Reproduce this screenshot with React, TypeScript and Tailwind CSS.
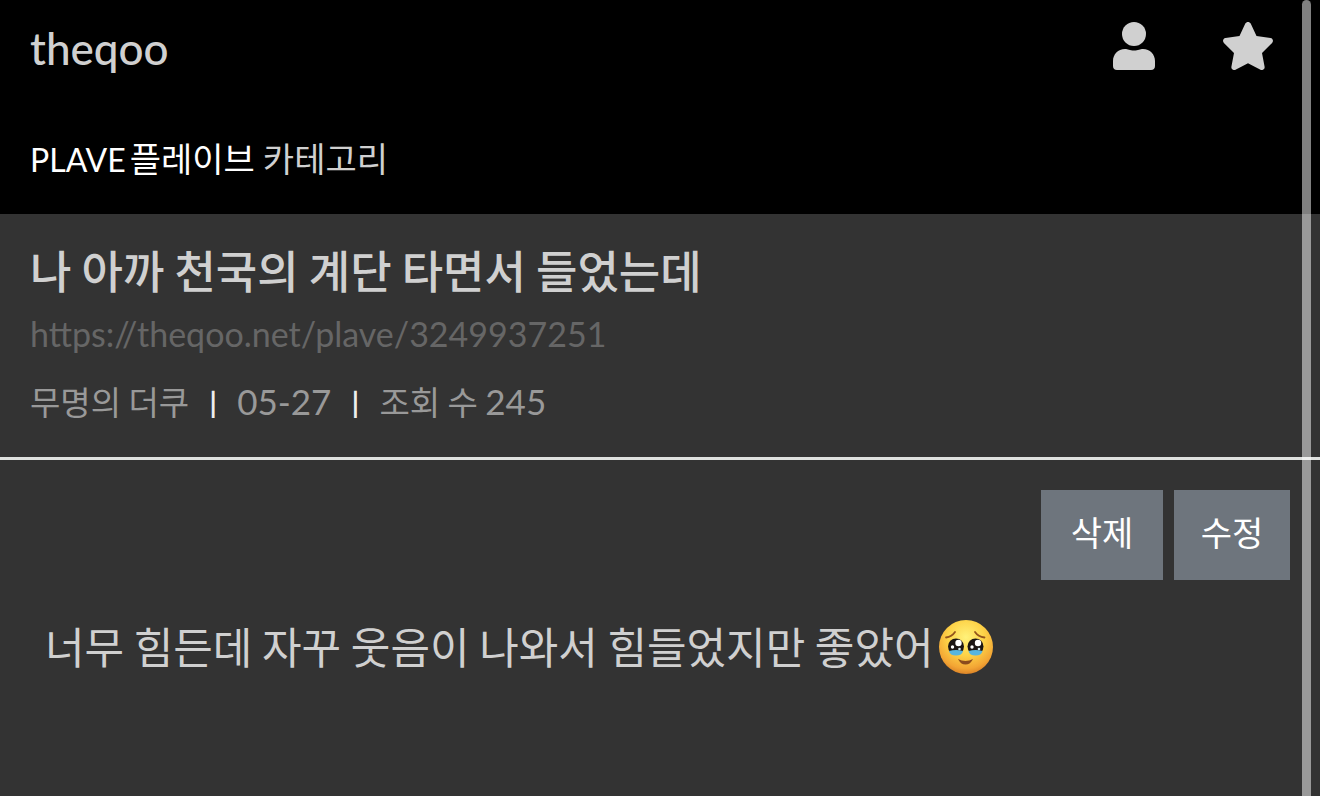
import React from "react";

const post = {
    title: "나 아까 천국의 계단 타면서 들었는데",
    url: "https://theqoo.net/plave/3249937251",
    author: "무명의 더쿠",
    date: "05-27",
    views: 245,
    body: "너무 힘든데 자꾸 웃음이 나와서 힘들었지만 좋았어",
};

const actions = [
    { label: "삭제", width: "w-[122px]" },
    { label: "수정", width: "w-[116px]" },
];

function UserIcon() {
    return (
        <svg viewBox="0 0 42 48" className="h-12 w-[42px]" fill="currentColor" aria-hidden="true">
            <circle cx="21" cy="12" r="12" />
            <path d="M12 27c3 0 4.500 1.500 9 1.500S27 27 30 27c7 0 12 5.500 12 12v5c0 2.500-1.500 4-4 4H4c-2.500 0-4-1.500-4-4v-5c0-6.500 5-12 12-12Z" />
        </svg>
    );
}

function StarIcon() {
    return (
        <svg viewBox="0 0 50 48" className="h-12 w-[50px]" fill="currentColor" aria-hidden="true">
            <path d="M22.300 1.600c1.100-2.100 4.300-2.100 5.400 0L33.500 14l14 1.900c2.400.4 3.300 3.200 1.600 5L39 31l2.600 13.800c.4 2.400-2 4-4.100 2.900L25 41.200l-12.500 6.500c-2.100 1.100-4.500-.5-4.100-2.900L11 31 .9 20.900c-1.700-1.800-.8-4.600 1.600-5l14-1.900Z" />
        </svg>
    );
}

function TearfulFace() {
    return (
        <svg viewBox="0 0 56 56" className="size-14 shrink-0" role="img" aria-label="🥹">
            <defs>
                <radialGradient id="skin" cx="50%" cy="32%" r="68%">
                    <stop offset="0" stopColor="#fff27a" />
                    <stop offset="0.5" stopColor="#fdd247" />
                    <stop offset="0.85" stopColor="#f3a534" />
                    <stop offset="1" stopColor="#dc8428" />
                </radialGradient>
            </defs>
            <circle cx="28" cy="28" r="27" fill="url(#skin)" />
            <g fill="none" stroke="#93541b" strokeWidth="1.800" strokeLinecap="round">
                <path d="M8 18.500c4-.5 7-2.500 9-5.500" />
                <path d="M37 13c2 3 5 5 9.500 5.500" />
            </g>
            {[18, 37.5].map((x) => (
                <g key={x}>
                    <circle cx={x} cy="27.500" r="8" fill="#1b1513" />
                    <path d={`M${x - 7} 32q7-2 14 0-1 4.500-7 4.500t-7-4.500Z`} fill="#58b5df" />
                    <circle cx={x + 2.5} cy="24" r="3.200" fill="#fff" />
                    <circle cx={x - 3.5} cy="28" r="1.700" fill="#fff" />
                    <circle cx={x + 3.5} cy="30" r="1.300" fill="#d7e9ef" />
                </g>
            ))}
            <path d="M20 40q7.500 4 15 0-2.500 5.500-7.500 5.500T20 40Z" fill="#8b4b1d" />
        </svg>
    );
}

function Divider() {
    return <span className="w-12 text-center font-['Lato',sans-serif] text-[28px] font-bold text-[#eee]">|</span>;
}

export default function App() {
    return (
        <div className="relative min-h-screen bg-[#333] font-['Noto_Sans_CJK_KR',sans-serif] text-[#d0d0d0]">
            <header className="bg-black pb-7">
                <div className="flex items-start justify-between pt-[22px] pr-[47px] pl-[30px]">
                    <a href="#home" className="font-['Lato',sans-serif] text-[44px] leading-[52px] font-medium">
                        theqoo
                    </a>
                    <div className="flex gap-[68px]">
                        <button type="button" aria-label="내 정보">
                            <UserIcon />
                        </button>
                        <button type="button" aria-label="즐겨찾기">
                            <StarIcon />
                        </button>
                    </div>
                </div>
                <nav className="mt-14 flex h-14 items-center gap-2 px-[30px] text-[34px] leading-none">
                    <a href="#plave" className="flex items-baseline gap-1 text-white">
                        <span className="font-['Lato',sans-serif] text-[32px]">PLAVE</span>
                        <span>플레이브</span>
                    </a>
                    <a href="#category">카테고리</a>
                </nav>
            </header>

            <main>
                <div className="border-b-[3px] border-[#dfe1df] px-[30px] pt-6 pb-5">
                    <h1 className="text-[45px] leading-[64px] font-medium">{post.title}</h1>
                    <a
                        href="#post"
                        className="mt-2 block font-['Lato',sans-serif] text-[34px] leading-[48px] text-[#666]"
                    >
                        {post.url}
                    </a>
                    <div className="mt-2 flex h-[71px] items-center text-[33px] text-[#999]">
                        <span>{post.author}</span>
                        <Divider />
                        <span className="font-['Lato',sans-serif] text-[35px]">{post.date}</span>
                        <Divider />
                        <span>
                            조회 수 <span className="font-['Lato',sans-serif] text-[35px]">{post.views}</span>
                        </span>
                    </div>
                </div>

                <div className="flex justify-end gap-[11px] pt-[30px] pr-[30px]">
                    {actions.map((action) => (
                        <button
                            key={action.label}
                            type="button"
                            className={`${action.width} h-[90px] bg-[#6e757d] pb-2 text-[34px] text-white`}
                        >
                            {action.label}
                        </button>
                    ))}
                </div>

                <article className="mt-[30px] flex items-center gap-1 px-[45px] text-[43px] leading-[70px]">
                    <p className="pb-1">{post.body}</p>
                    <TearfulFace />
                </article>
            </main>

            {/* Scroll thumb */}
            <div className="absolute inset-y-0 right-[9px] w-[9px] rounded-t-full bg-white/50" />
        </div>
    );
}
